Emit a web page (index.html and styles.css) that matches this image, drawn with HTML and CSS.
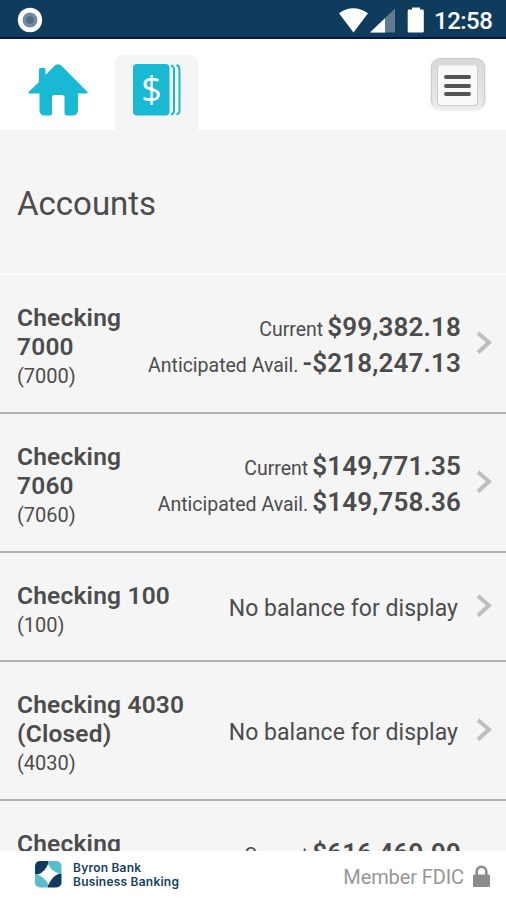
FILE: index.html
```html
<!DOCTYPE html>
<html lang="en">
<head>
<meta charset="utf-8">
<title>Accounts</title>
<link rel="stylesheet" href="styles.css">
</head>
<body>
<div class="app">
  <header class="status">
    <svg class="status-dot" width="26" height="26" viewBox="0 0 26 26"><circle cx="13" cy="13" r="12.2" fill="#fff"/><circle cx="13" cy="13" r="7.5" fill="#718c9e"/><circle cx="13" cy="13" r="3.8" fill="#4d6e84"/></svg>
    <svg class="status-icons" width="88" height="28" viewBox="0 0 88 28">
      <path d="M1 6.200Q15 -3.800 30 6.200L15.500 25.500Z" fill="#fff"/>
      <path d="M32 25.500L57 1.500V25.500Z" fill="#5f7c93"/><path d="M32 25.500L47 11.200V25.500Z" fill="#fff"/>
      <path d="M74 .5h8v2h2.500q1.300 0 1.300 1.300v20.400q0 1.300-1.300 1.300h-13.500q-1.300 0-1.300-1.300v-20.400q0-1.300 1.300-1.300h3z" fill="#fff"/>
    </svg>
    <span class="clock">12:58</span>
  </header>
  <nav class="tabs">
    <svg class="home" width="60" height="54" viewBox="0 0 60 54"><path d="M11 19V6.500q0-1.500 1.500-1.500h3.500q1.500 0 1.500 1.500v5.500L26 3.200q4-3.800 8 0L59 28.500q1.500 1.900-1 1.900H50V47q0 5.500-5.500 5.500H39Q36.500 52.500 36.500 50V34.500q0-2.500-2.500-2.500H26.500q-2.500 0-2.500 2.500V50Q24 52.500 21.500 52.500H17q-5.500 0-5.500-5.500V30.400H2q-2.500 0-1-1.900Z" fill="#1ab9d3"/></svg>
    <div class="tab">
      <svg width="48" height="52" viewBox="0 0 48 52"><rect width="36.500" height="51.500" rx="4" fill="#1ab9d3"/><path d="M38 1.500Q41 2 41 6V46Q41 50 38 50.500M43.500 1Q46.500 2 46.500 6V46Q46.500 50 43.500 50.500" fill="none" stroke="#1ab9d3" stroke-width="2"/><text class="dollar" x="18.500" y="37.500" text-anchor="middle">$</text></svg>
    </div>
    <div class="menu"><div class="menu-face"><i></i><i></i><i></i></div></div>
  </nav>
  <h1 class="title">Accounts</h1>
  <main class="list">
    <section class="row">
      <div class="name">Checking<br>7000<small>(7000)</small></div>
      <div class="balances"><p>Current <b>$99,382.18</b></p><p>Anticipated Avail. <b>-$218,247.13</b></p></div>
      <svg class="chevron" width="16" height="24" viewBox="0 0 16 24"><path d="M2 2L13 11.500 2 21.500"/></svg>
    </section>
    <section class="row">
      <div class="name">Checking<br>7060<small>(7060)</small></div>
      <div class="balances"><p>Current <b>$149,771.35</b></p><p>Anticipated Avail. <b>$149,758.36</b></p></div>
      <svg class="chevron" width="16" height="24" viewBox="0 0 16 24"><path d="M2 2L13 11.500 2 21.500"/></svg>
    </section>
    <section class="row short">
      <div class="name">Checking 100<small>(100)</small></div>
      <div class="none">No balance for display</div>
      <svg class="chevron" width="16" height="24" viewBox="0 0 16 24"><path d="M2 2L13 11.500 2 21.500"/></svg>
    </section>
    <section class="row">
      <div class="name">Checking 4030<br>(Closed)<small>(4030)</small></div>
      <div class="none">No balance for display</div>
      <svg class="chevron" width="16" height="24" viewBox="0 0 16 24"><path d="M2 2L13 11.500 2 21.500"/></svg>
    </section>
    <section class="row">
      <div class="name">Checking</div>
      <div class="balances"><p>Current <b>$616,469.99</b></p></div>
      <span class="chevron"></span>
    </section>
  </main>
  <footer class="footer">
    <svg class="logo" width="27" height="27" viewBox="0 0 27 27"><defs><clipPath id="tile"><rect width="26.500" height="26.500" rx="5"/></clipPath></defs><g clip-path="url(#tile)"><path d="M0 0H13V13H0Z" fill="#103b5d"/><path d="M13 0H27V13H13Z" fill="#58bdd0"/><path d="M0 13H13V27H0Z" fill="#58bdd0"/><path d="M13 13H27V27H13Z" fill="#103b5d"/></g><path d="M13 3Q15.500 9.500 24 12.500Q16 16.500 13.500 24Q10.500 17 3 13.500Q10.500 10.500 13 3Z" fill="#fff"/></svg>
    <div class="brand"><span>Byron Bank</span><span>Business Banking</span></div>
    <span class="fdic">Member FDIC</span>
    <svg class="lock" width="17" height="23" viewBox="0 0 17 23"><path d="M3.700 11V6.500a4.800 4.800 0 0 1 9.600 0V11" fill="none" stroke="#8b8b8b" stroke-width="2.600"/><rect y="9.500" width="17" height="12.500" rx="1.500" fill="#8b8b8b"/></svg>
  </footer>
</div>
</body>
</html>
```

FILE: styles.css
```css
* { box-sizing: border-box; }
body { margin: 0; background: #fff; font-family: Roboto, "Liberation Sans", sans-serif; color: #4c4c4c; }
svg { display: block; flex: none; }
.app { width: 506px; height: 900px; display: flex; flex-direction: column; overflow: hidden; background: #f5f5f5; }
.status { height: 39px; flex: none; display: flex; align-items: flex-start; background: #0f3b5c; border-bottom: 2px solid #061449; padding: 7px 0 0 17px; }
.status-icons { margin-left: 295px; }
.clock { margin: -1px 0 0 8px; font-size: 24px; line-height: 30px; font-weight: 500; letter-spacing: -.5px; color: #fff; }
.tabs { height: 91px; flex: none; display: flex; align-items: flex-start; background: #fff; padding-left: 28px; }
.home { margin-top: 24px; }
.tab { width: 83px; height: 75px; margin: 16px 0 0 27px; padding: 9px 0 0 18px; background: #f5f5f5; border-radius: 7px 7px 0 0; }
.dollar { font: 36px "Open Sans", sans-serif; fill: #fff; }
.menu { width: 54px; height: 51px; margin: 19px 0 0 233px; border-radius: 9px; padding: 6px 6px 2px 5px; background: linear-gradient(#d8d8d8, #ebebeb); border: 1px solid #cbcbcb; border-bottom-color: #eee; box-shadow: 0 1px 3px #ddd; display: flex; }
.menu-face { flex: 1; border-radius: 4px; background: #f9f9f9; border: 1px solid #ccc; border-top-color: #eee; display: flex; flex-direction: column; align-items: center; justify-content: center; gap: 4.500px; }
.menu-face i { width: 27px; height: 4px; border-radius: 2px; background: #555; }
.title { height: 145px; flex: none; margin: 0; border-bottom: 2px solid #fbfbfb; padding: 54px 17px 0; font-size: 33px; line-height: 40px; font-weight: 400; letter-spacing: 0; }
.list { height: 576px; flex: none; overflow: hidden; }
.row { height: 139px; border-bottom: 2px solid #b2b2b2; padding: 0 14px 0 17px; display: flex; align-items: flex-start; }
.row:first-child { height: 138.5px; }
.row.short { height: 109px; }
.name { padding-top: 28px; font-size: 24.500px; line-height: 29px; font-weight: 600; letter-spacing: .2px; white-space: nowrap; }
.name small { display: block; font-size: 20px; line-height: 31px; font-weight: 400; letter-spacing: 0; }
.balances { margin-left: auto; padding-top: 34px; text-align: right; white-space: nowrap; }
.balances p { display: flex; justify-content: flex-end; align-items: baseline; gap: 4px; height: 36px; margin: 0; font-size: 19.500px; line-height: 36px; }
.balances b { font-size: 26px; font-weight: 600; letter-spacing: .15px; }
.none { margin-left: auto; padding: 5px 3px 0 0; align-self: center; font-size: 23px; line-height: 30px; letter-spacing: .05px; white-space: nowrap; }
.chevron { width: 16px; margin-left: 15px; align-self: center; fill: none; stroke: #bebebe; stroke-width: 4px; }
.footer { height: 49px; flex: none; background: #fff; display: flex; align-items: flex-start; padding: 10px 16px 0 35px; }
.brand { display: flex; flex-direction: column; margin-left: 11px; color: #143f60; font: 600 12px/14px Inter, sans-serif; letter-spacing: .22px; white-space: nowrap; }
.fdic { margin-left: auto; font-size: 20px; line-height: 32px; letter-spacing: -.1px; color: #969696; white-space: nowrap; }
.lock { margin: 4px 0 0 9px; }
```
